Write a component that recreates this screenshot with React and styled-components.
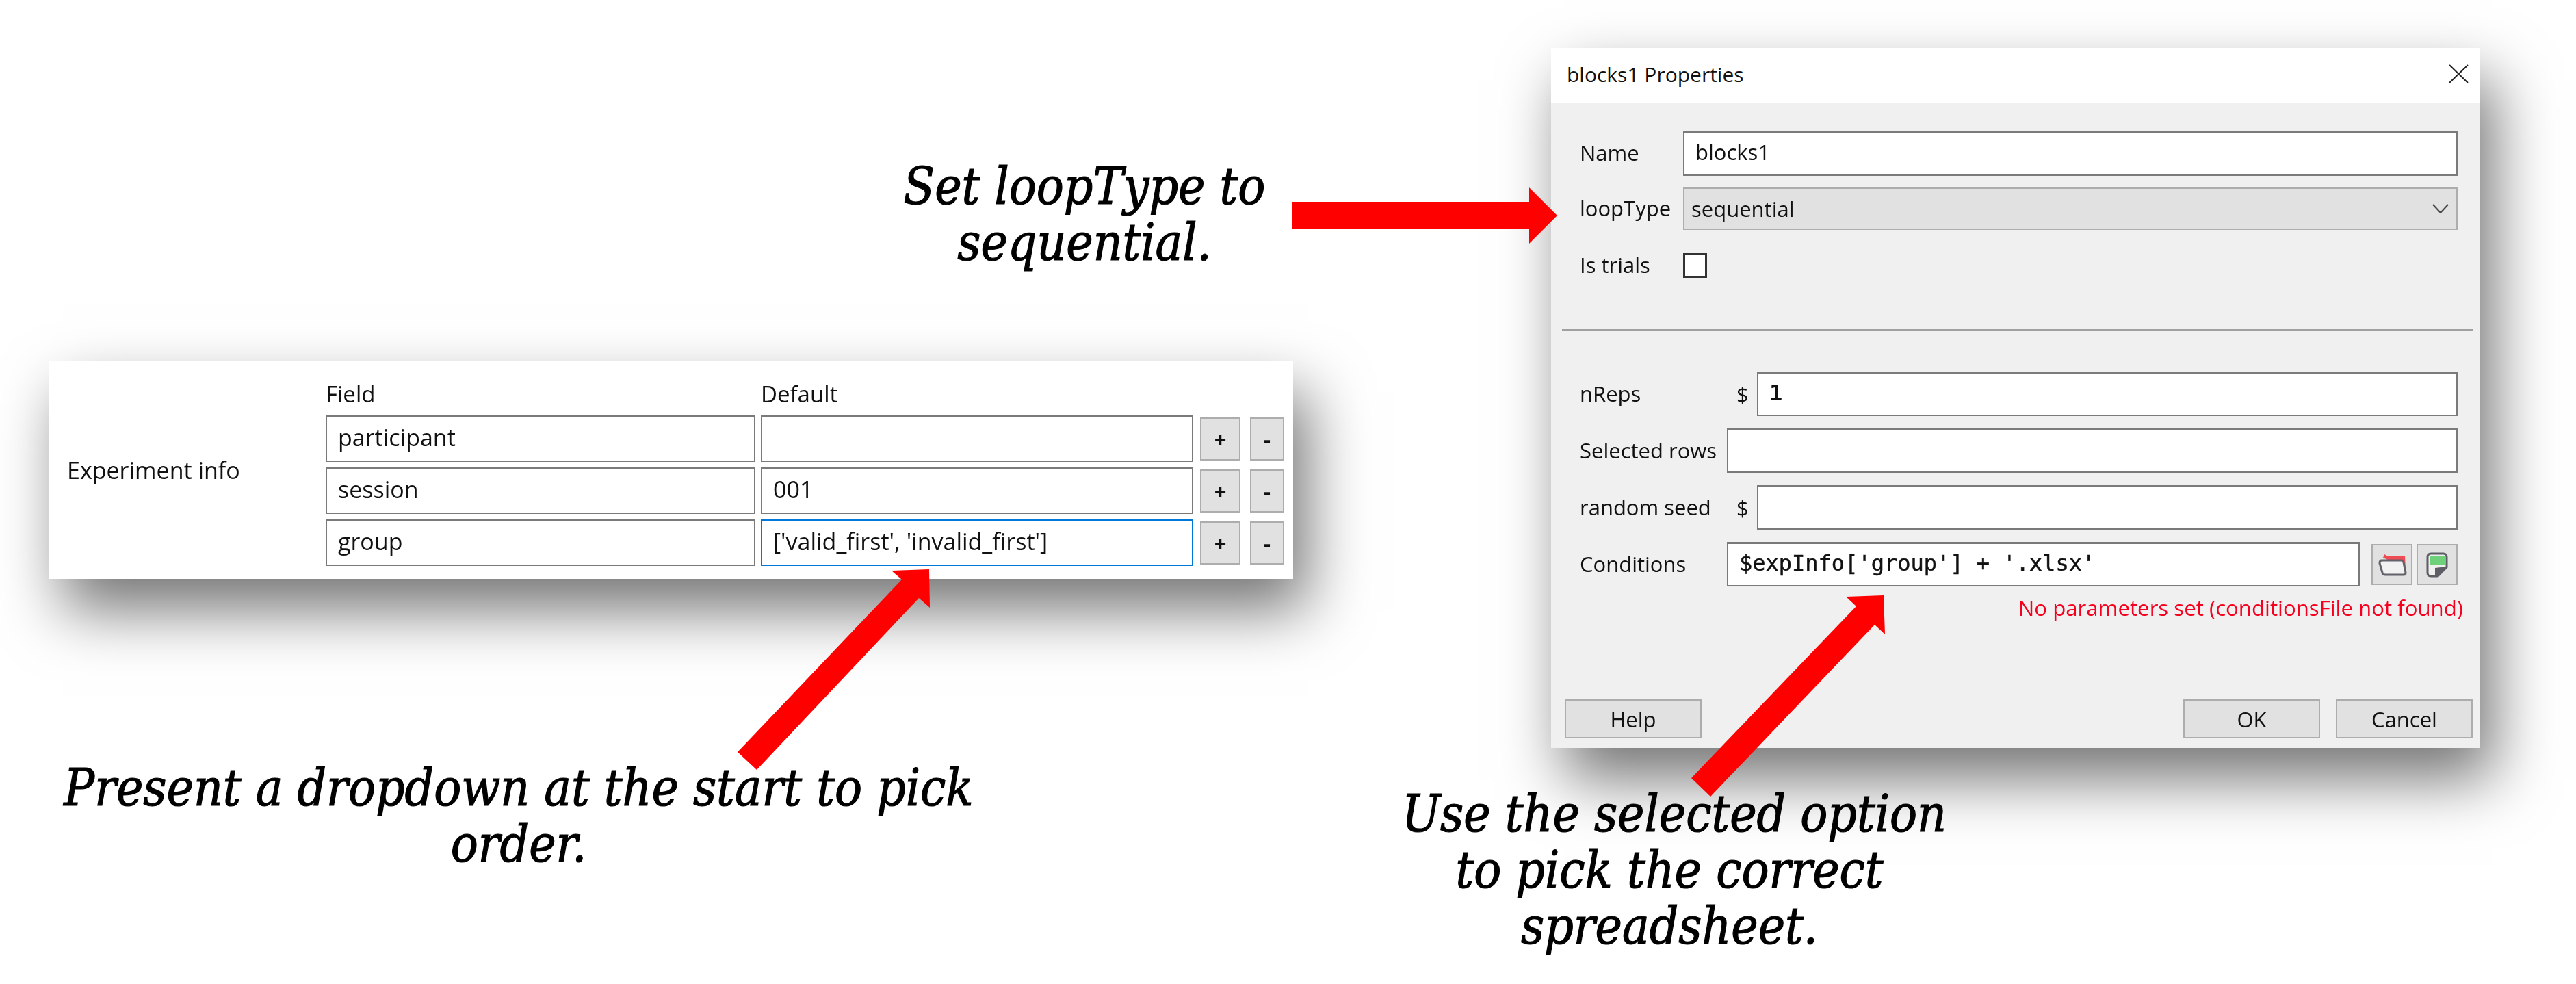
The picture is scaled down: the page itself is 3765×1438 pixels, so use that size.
import React from "react";
import styled, { createGlobalStyle } from "styled-components";

const GlobalStyle = createGlobalStyle`
	html, body {
		margin: 0;
		background: #fff;
	}
`;

const UI_FONT = `"Open Sans", "Noto Sans", sans-serif`;

const Page = styled.div`
	position: relative;
	display: flex;
	width: 3765px;
	height: 1438px;
	padding-left: 72px;
	box-sizing: border-box;
	overflow: hidden;
	background: #fff;
	font-family: ${UI_FONT};
	color: #111;
`;
const LeftColumn = styled.div`
	display: flex;
	flex-direction: column;
	width: 1818px;
	margin-right: 377px;
	flex: none;
`;
const RightColumn = styled.div`
	display: flex;
	flex-direction: column;
	width: 1357px;
	padding-top: 70px;
	flex: none;
`;
const Caption = styled.div`
	font-family: "DejaVu Serif Condensed", "DejaVu Serif", serif;
	font-style: italic;
	font-size: 74px;
	line-height: 82px;
	-webkit-text-stroke: 1.2px #000;
	text-align: center;
	white-space: nowrap;
	color: #000;
	width: ${(p) => p.$width}px;
	margin: ${(p) => p.$margin};
`;
const Panel = styled.div`
	display: flex;
	flex: none;
	height: 318px;
	background: #fff;
	box-shadow: 20px 45px 85px rgba(0, 0, 0, 0.55);
	filter: blur(0.6px);
`;
const PanelLabel = styled.div`
	width: 378px;
	padding-left: 26px;
	flex: none;
	font-size: 34px;
	line-height: 318px;
`;
const Table = styled.div`
	display: flex;
	flex-direction: column;
	gap: 8px;
	padding-top: 22px;
`;
const HeadRow = styled.div`
	display: flex;
	height: 50px;
	margin-bottom: -1px;
	align-items: center;
	font-size: 33px;
`;
const HeadCell = styled.div`
	width: ${(p) => p.$width}px;
`;
const TableRow = styled.div`
	display: flex;
	align-items: center;
	height: 68px;
`;
const Box = styled.div`
	display: flex;
	align-items: center;
	flex: none;
	box-sizing: border-box;
	width: ${(p) => (p.$width ? `${p.$width}px` : "auto")};
	height: ${(p) => p.$height || 68}px;
	padding: 0 0 5px 16px;
	margin-left: ${(p) => p.$gap || 0}px;
	background: #fff;
	border: 2px solid ${(p) => (p.$focused ? "#0078d7" : "#7a7a7a")};
	border-top-width: 3px;
	font-size: ${(p) => p.$size || 31}px;
	white-space: nowrap;
`;
const SmallButton = styled.div`
	display: flex;
	align-items: center;
	justify-content: center;
	flex: none;
	box-sizing: border-box;
	width: ${(p) => p.$width}px;
	height: 63px;
	margin-left: ${(p) => p.$gap}px;
	background: #e1e1e1;
	border: 2px solid #adadad;
	font-size: 31px;
	font-weight: 700;
`;

const Dialog = styled.div`
	position: relative;
	display: flex;
	flex-direction: column;
	flex: none;
	height: 1023px;
	background: #f0f0f0;
	box-shadow: 20px 45px 85px rgba(0, 0, 0, 0.55);
	filter: blur(0.6px);
`;
const TitleBar = styled.div`
	display: flex;
	align-items: center;
	justify-content: space-between;
	flex: none;
	height: 80px;
	padding: 0 16px 4px 23px;
	box-sizing: border-box;
	background: #fff;
	font-size: 30px;
`;
const DialogBody = styled.div`
	display: flex;
	flex-direction: column;
	flex: 1;
	padding: 41px 10px 14px 20px;
`;
const Row = styled.div`
	display: flex;
	align-items: center;
	flex: none;
	height: ${(p) => p.$height}px;
	margin-top: ${(p) => p.$top || 0}px;
	padding: 0 22px;
`;
const RowLabel = styled.div`
	flex: none;
	width: ${(p) => p.$width}px;
	margin-bottom: 2px;
	font-size: 31px;
	white-space: nowrap;
`;
const Dollar = styled.div`
	flex: none;
	width: 30px;
	font-size: 31px;
`;
const Fill = styled(Box)`
	flex: 1;
`;
const Combo = styled.div`
	display: flex;
	align-items: center;
	justify-content: space-between;
	flex: 1;
	height: 62px;
	box-sizing: border-box;
	padding: 0 11px 0 10px;
	background: #e1e1e1;
	border: 2px solid #adadad;
	font-size: 31px;
`;
const Checkbox = styled.div`
	width: 35px;
	height: 37px;
	box-sizing: border-box;
	background: #fff;
	border: 3px solid #333;
`;
const Divider = styled.div`
	height: 3px;
	flex: none;
	margin: 75px 0 0 -4px;
	background: #a0a0a0;
`;
const Mono = styled.span`
	font-family: "DejaVu Sans Mono", monospace;
	font-size: 32px;
	-webkit-text-stroke: ${(p) => (p.$bold ? "0" : "0.5px")} #111;
	font-weight: ${(p) => (p.$bold ? 700 : 400)};
`;
const IconButton = styled.div`
	display: flex;
	flex: none;
	width: 60px;
	height: 60px;
	box-sizing: border-box;
	margin-left: ${(p) => p.$gap}px;
	background: #e1e1e1;
	border: 2px solid #adadad;
`;
const ErrorText = styled.div`
	align-self: flex-end;
	flex: none;
	margin: 11px 14px 0 0;
	font-size: 31.2px;
	line-height: 40px;
	color: #f5001e;
	white-space: nowrap;
`;
const Footer = styled.div`
	display: flex;
	align-items: center;
	flex: none;
	margin-top: auto;
`;
const FooterButton = styled.div`
	display: flex;
	align-items: center;
	justify-content: center;
	box-sizing: border-box;
	width: 200px;
	height: 57px;
	margin-left: ${(p) => p.$gap || 0}px;
	background: #e1e1e1;
	border: 2px solid #adadad;
	font-size: 31px;
`;
const Spacer = styled.div`
	flex: 1;
`;
const Arrows = styled.svg`
	position: absolute;
	left: 0;
	top: 0;
	width: 3765px;
	height: 1438px;
	pointer-events: none;
`;

const fields = [
	{ name: "participant", value: "" },
	{ name: "session", value: "001" },
	{ name: "group", value: "['valid_first', 'invalid_first']", focused: true },
];

function FolderIcon() {
	return (
		<svg width="56" height="56" viewBox="2 2 56 56">
			<path d="M17 20 L19 15 L24 18 L49 18 L50 38 L40 30 Z" fill="#ee4b55" />
			<path
				d="M15 24 L44 24 Q46 24 47 27 L50 42 Q50 45 47 45 L20 45 Q17 45 16 42 L12 28 Q12 24 15 24 Z"
				fill="#f1f1f1"
				stroke="#62626a"
				strokeWidth="3"
				strokeLinejoin="round"
			/>
		</svg>
	);
}

function SheetIcon() {
	return (
		<svg width="56" height="56" viewBox="2 2 56 56">
			<path
				d="M21 14 L39 14 Q44 14 44 19 L44 34 L31 47 L21 47 Q16 47 16 42 L16 19 Q16 14 21 14 Z"
				fill="#efefef"
				stroke="#5d5d65"
				strokeWidth="3"
			/>
			<rect x="20" y="18" width="21" height="12" fill="#6fd07a" />
			<path d="M27 35 L44 33 L31 47 L27 47 Z" fill="#5d5d65" />
		</svg>
	);
}

export default function App() {
	return (
		<>
			<GlobalStyle />
			<Page>
				<LeftColumn>
					<Caption $width={600} $margin="231px 0 133px 1213px">
						Set loopType to
						<br />
						sequential.
					</Caption>
					<Panel>
						<PanelLabel>Experiment info</PanelLabel>
						<Table>
							<HeadRow>
								<HeadCell $width={636}>Field</HeadCell>
								<HeadCell $width={600}>Default</HeadCell>
							</HeadRow>
							{fields.map((field) => (
								<TableRow key={field.name}>
									<Box $width={628} $size={34}>{field.name}</Box>
									<Box $width={632} $size={34} $gap={8} $focused={field.focused}>
										{field.value}
									</Box>
									<SmallButton $width={59} $gap={10}>+</SmallButton>
									<SmallButton $width={50} $gap={14}>-</SmallButton>
								</TableRow>
							))}
						</Table>
					</Panel>
					<Caption $width={1372} $margin="264px 0 0 0">
						Present a dropdown at the start to pick
						<br />
						order.
					</Caption>
				</LeftColumn>
				<RightColumn>
					<Dialog>
						<TitleBar>
							blocks1 Properties
							<svg width="29" height="28" viewBox="0 0 29 28">
								<path d="M1 1 L28 27 M28 1 L1 27" stroke="#222" strokeWidth="2" fill="none" />
							</svg>
						</TitleBar>
						<DialogBody>
							<Row $height={66}>
								<RowLabel $width={151}>Name</RowLabel>
								<Fill $height={66}>blocks1</Fill>
							</Row>
							<Row $height={62} $top={17}>
								<RowLabel $width={151}>loopType</RowLabel>
								<Combo>
									sequential
									<svg width="24" height="14" viewBox="0 0 24 14">
										<path d="M1 1 L12 13 L23 1" stroke="#444" strokeWidth="2" fill="none" />
									</svg>
								</Combo>
							</Row>
							<Row $height={37} $top={33}>
								<RowLabel $width={151}>Is trials</RowLabel>
								<Checkbox />
							</Row>
							<Divider />
							<Row $height={65} $top={59}>
								<RowLabel $width={229}>nReps</RowLabel>
								<Dollar>$</Dollar>
								<Fill $height={65}>
									<Mono $bold>1</Mono>
								</Fill>
							</Row>
							<Row $height={65} $top={18}>
								<RowLabel $width={215}>Selected rows</RowLabel>
								<Fill $height={65} />
							</Row>
							<Row $height={65} $top={18}>
								<RowLabel $width={229}>random seed</RowLabel>
								<Dollar>$</Dollar>
								<Fill $height={65} />
							</Row>
							<Row $height={65} $top={18}>
								<RowLabel $width={215}>Conditions</RowLabel>
								<Fill $height={65}>
									<Mono>$expInfo['group'] + '.xlsx'</Mono>
								</Fill>
								<IconButton $gap={17}>
									<FolderIcon />
								</IconButton>
								<IconButton $gap={6}>
									<SheetIcon />
								</IconButton>
							</Row>
							<ErrorText>No parameters set (conditionsFile not found)</ErrorText>
							<Footer>
								<FooterButton>Help</FooterButton>
								<Spacer />
								<FooterButton>OK</FooterButton>
								<FooterButton $gap={23}>Cancel</FooterButton>
							</Footer>
						</DialogBody>
					</Dialog>
					<Caption $width={782} $margin="55px 0 0 -218px">
						Use the selected option
						<br />
						to pick the correct
						<br />
						spreadsheet.
					</Caption>
				</RightColumn>
				<Arrows viewBox="0 0 3765 1438">
					<polygon fill="#ff0000" points="1888,295 2235,295 2235,274 2276,315 2235,356 2235,335 1888,335" />
					<polygon fill="#ff0000" points="1303,834 1358,832 1359,888 1343,874 1106,1125 1078,1099 1318,847" />
					<polygon fill="#ff0000" points="2698,872 2753,870 2755,927 2740,913 2500,1164 2472,1137 2713,886" />
				</Arrows>
			</Page>
		</>
	);
}
